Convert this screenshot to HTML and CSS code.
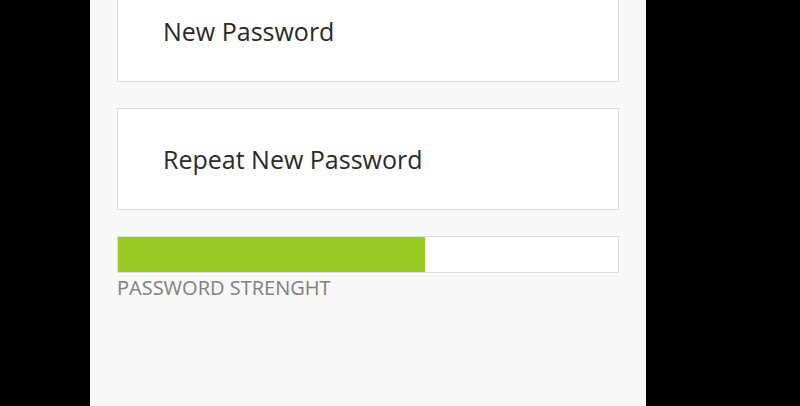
FILE: index.html
```html
<!DOCTYPE html>
<html>
<head>
<meta charset="utf-8">
<link rel="stylesheet" href="styles.css">
</head>
<body>
<div class="panel">
  <div class="form">
    <div class="field">New Password</div>
    <div class="field">Repeat New Password</div>
    <div class="strength">
      <div class="meter"><div class="fill" style="width:61.3%"></div></div>
      <div class="label">PASSWORD STRENGHT</div>
    </div>
  </div>
</div>
</body>
</html>
```
FILE: styles.css
```css
html, body {
  margin: 0;
  padding: 0;
  background: #000;
  height: 100%;
  overflow: hidden;
}
.panel {
  display: flow-root;
  margin-left: 90px;
  width: 556px;
  height: 100%;
  background: #f8f8f8;
  box-sizing: border-box;
  padding: 0 27px 0 27px;
}
.form {
  margin-top: -20px;
  display: flex;
  flex-direction: column;
  gap: 26px;
}
.field {
  height: 102px;
  box-sizing: border-box;
  border: 1px solid #dcdcdc;
  background: #fff;
  display: flex;
  align-items: center;
  padding-left: 45px;
  font-family: "Open Sans", sans-serif;
  font-size: 25px;
  color: #2a2a2a;
}
.meter {
  height: 37px;
  box-sizing: border-box;
  border: 1px solid #dcdcdc;
  background: #fff;
}
.fill {
  height: 100%;
  background: #99cb25;
}
.label {
  margin-top: 2px;
  font-family: "Open Sans", sans-serif;
  font-size: 20px;
  color: #808080;
  line-height: 26px;
}
```
